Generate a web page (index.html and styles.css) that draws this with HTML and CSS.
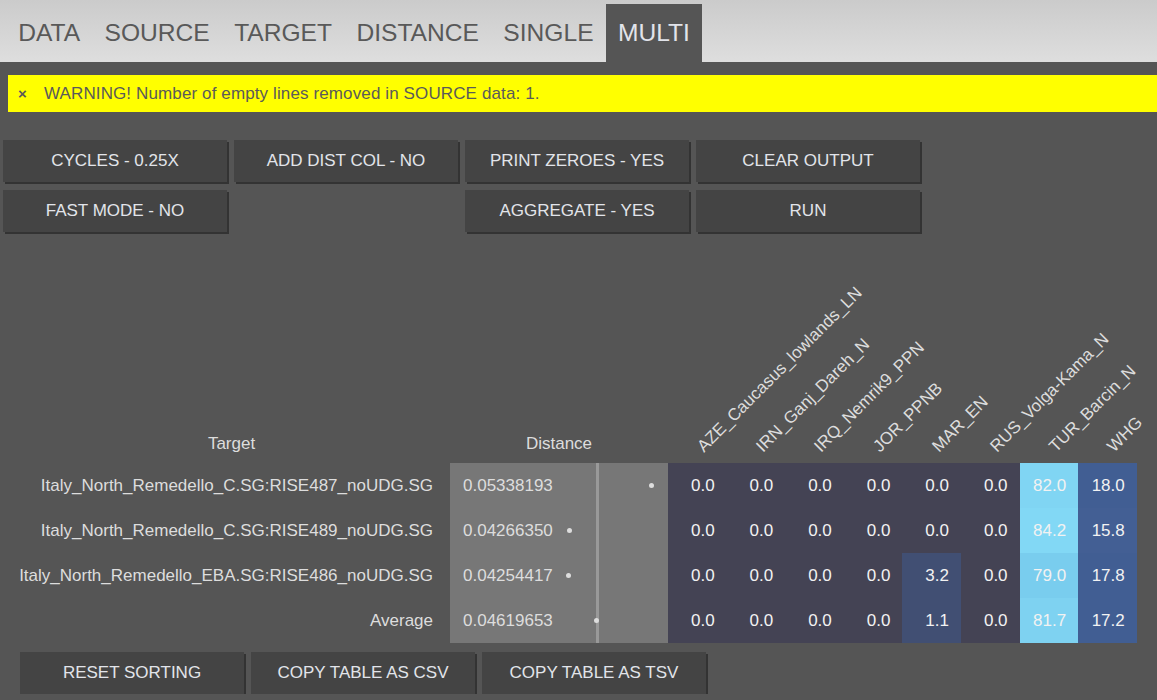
FILE: index.html
```html
<!DOCTYPE html>
<html lang="en">
<head>
    <meta charset="UTF-8">
    <title>Multi</title>
    <link rel="stylesheet" href="styles.css">
</head>
<body>

<nav class="tabs">
    <a class="tab">DATA</a>
    <a class="tab">SOURCE</a>
    <a class="tab">TARGET</a>
    <a class="tab">DISTANCE</a>
    <a class="tab">SINGLE</a>
    <a class="tab active">MULTI</a>
</nav>

<div class="alert">
    <span class="alert-close">&times;</span>
    WARNING! Number of empty lines removed in SOURCE data: 1.
</div>

<div class="controls">
    <button class="btn">CYCLES - 0.25X</button>
    <button class="btn">ADD DIST COL - NO</button>
    <button class="btn">PRINT ZEROES - YES</button>
    <button class="btn">CLEAR OUTPUT</button>
    <button class="btn">FAST MODE - NO</button>
    <span></span>
    <button class="btn">AGGREGATE - YES</button>
    <button class="btn">RUN</button>
</div>

<table class="results">
    <thead>
        <tr>
            <th class="col-target">Target</th>
            <th class="col-dist">Distance</th>
            <th class="col-pop"><div class="rot">AZE_Caucasus_lowlands_LN</div></th>
            <th class="col-pop"><div class="rot">IRN_Ganj_Dareh_N</div></th>
            <th class="col-pop"><div class="rot">IRQ_Nemrik9_PPN</div></th>
            <th class="col-pop"><div class="rot">JOR_PPNB</div></th>
            <th class="col-pop"><div class="rot">MAR_EN</div></th>
            <th class="col-pop"><div class="rot">RUS_Volga-Kama_N</div></th>
            <th class="col-pop"><div class="rot">TUR_Barcin_N</div></th>
            <th class="col-pop"><div class="rot">WHG</div></th>
        </tr>
    </thead>
    <tbody>
        <tr>
            <td class="col-target">Italy_North_Remedello_C.SG:RISE487_noUDG.SG</td>
            <td class="col-dist">0.05338193<span class="avg-line"></span><span class="dot" style="left: 199px"></span></td>
            <td class="v0">0.0</td><td class="v0">0.0</td><td class="v0">0.0</td><td class="v0">0.0</td>
            <td class="v0">0.0</td><td class="v0">0.0</td>
            <td class="hi" style="background: #80d5f3">82.0</td>
            <td class="mid">18.0</td>
        </tr>
        <tr>
            <td class="col-target">Italy_North_Remedello_C.SG:RISE489_noUDG.SG</td>
            <td class="col-dist">0.04266350<span class="avg-line"></span><span class="dot" style="left: 117px"></span></td>
            <td class="v0">0.0</td><td class="v0">0.0</td><td class="v0">0.0</td><td class="v0">0.0</td>
            <td class="v0">0.0</td><td class="v0">0.0</td>
            <td class="hi" style="background: #82d8f5">84.2</td>
            <td class="mid" style="background: #435f94">15.8</td>
        </tr>
        <tr>
            <td class="col-target">Italy_North_Remedello_EBA.SG:RISE486_noUDG.SG</td>
            <td class="col-dist">0.04254417<span class="avg-line"></span><span class="dot" style="left: 116px"></span></td>
            <td class="v0">0.0</td><td class="v0">0.0</td><td class="v0">0.0</td><td class="v0">0.0</td>
            <td class="low">3.2</td><td class="v0">0.0</td>
            <td class="hi" style="background: #79cdee">79.0</td>
            <td class="mid">17.8</td>
        </tr>
        <tr>
            <td class="col-target">Average</td>
            <td class="col-dist">0.04619653<span class="avg-line"></span><span class="dot" style="left: 144px"></span></td>
            <td class="v0">0.0</td><td class="v0">0.0</td><td class="v0">0.0</td><td class="v0">0.0</td>
            <td class="low">1.1</td><td class="v0">0.0</td>
            <td class="hi" style="background: #7ed2f1">81.7</td>
            <td class="mid">17.2</td>
        </tr>
    </tbody>
</table>

<div class="table-actions">
    <button class="btn">RESET SORTING</button>
    <button class="btn">COPY TABLE AS CSV</button>
    <button class="btn">COPY TABLE AS TSV</button>
</div>

</body>
</html>
```

FILE: styles.css
```css
body {
    margin: 0;
    background-color: #555;
    font-family: "Liberation Sans", Arial, sans-serif;
    font-size: 17px;
    color: #ddd;
}

/* tab bar */
.tabs {
    display: flex;
    height: 58px;
    padding: 4px 0 0 6px;
    background: linear-gradient(#cbcbcb, #dedede);
}

.tab {
    padding: 0 12.2px;
    line-height: 58px;
    font-size: 24.6px;
    color: #595959;
    cursor: pointer;
}

.tab.active {
    background-color: #555;
    color: #e2e4ea;
}

/* warning */
.alert {
    display: flex;
    align-items: center;
    height: 37px;
    margin: 13px 0 0 8px;
    padding-left: 10px;
    background-color: #ff0;
    color: #5a5a5a;
    letter-spacing: 0.12px;
}

.alert-close {
    width: 26px;
    font-size: 15px;
    font-weight: bold;
}

/* buttons */
.controls {
    display: grid;
    grid-template-columns: repeat(4, 224px);
    gap: 8px 7px;
    margin: 28px 0 0 3px;
}

.btn {
    height: 42px;
    width: 224px;
    padding: 0;
    border: none;
    background-color: #444;
    box-shadow: 2px 2px 0 #333;
    font-family: inherit;
    font-size: 17px;
    color: #e2e4ea;
    cursor: pointer;
}

/* results table */
.results {
    border-collapse: collapse;
    border-spacing: 0;
}

.results th {
    height: 222px;
    padding: 0 0 9px;
    vertical-align: bottom;
    font-weight: normal;
    color: #ddd;
}

.results td {
    height: 45px;
    padding: 0 12px 0 0;
    text-align: right;
    color: #f2f2f2;
}

.results .col-target {
    width: 417px;
    padding: 0 17px 0 16px;
    text-align: right;
    white-space: nowrap;
    color: #ddd;
}

.results th.col-target {
    width: 403px;
    text-align: center;
    padding: 0 17px 9px 30px;
}

.results .col-dist {
    width: 205px;
}

.results td.col-dist {
    position: relative;
    padding: 0 0 0 13px;
    text-align: left;
    background-color: #777;
    color: #ddd;
}

.col-pop {
    width: 58.6px;
    position: relative;
}

.results th.col-pop {
    padding: 0;
}

.rot {
    position: absolute;
    left: calc(50% + 9px);
    bottom: 8px;
    line-height: 17px;
    white-space: nowrap;
    transform-origin: left bottom;
    transform: rotate(-45deg);
}

.avg-line {
    position: absolute;
    top: 0;
    bottom: 0;
    left: 146px;
    width: 3px;
    background-color: #999;
}

.dot {
    position: absolute;
    top: 50%;
    width: 5px;
    height: 5px;
    margin-top: -3px;
    border-radius: 50%;
    background-color: #ddd;
}

.v0 {
    background-color: #444354;
}

.low {
    background-color: #414f73;
}

.mid {
    background-color: #415e93;
}

.table-actions {
    display: flex;
    gap: 7px;
    margin: 9px 0 0 20px;
}
```
